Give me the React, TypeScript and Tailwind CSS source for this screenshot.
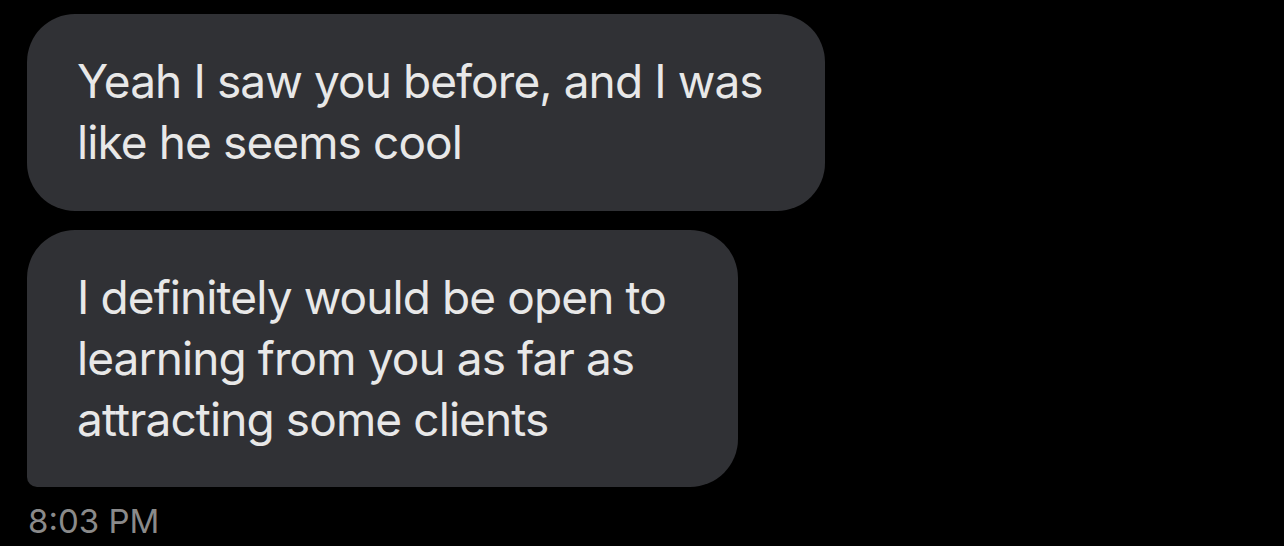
export default function App() {
    return (
        <div className="min-h-screen w-full bg-black pl-[27px] pt-[14px] font-['Inter',sans-serif]">
            <div className="flex flex-col items-start gap-[19px]">
                <div className="w-[798px] rounded-[48px] bg-[#303135] pl-[50px] pr-[40px] pt-[37px] pb-[38px] text-[46px] leading-[61px] tracking-[-0.9px] text-[#e8e8e8]">
                    Yeah I saw you before, and I was
                    <br/>
                    like he seems cool
                </div>
                <div className="w-[711px] rounded-[48px] rounded-bl-[10px] bg-[#303135] pl-[50px] pr-[40px] pt-[37px] pb-[37px] text-[46px] leading-[61px] tracking-[-0.9px] text-[#e8e8e8]">
                    I definitely would be open to
                    <br/>
                    learning from you as far as
                    <br/>
                    attracting some clients
                </div>
            </div>
            <div className="mt-[14px] pl-[1px] text-[33px] leading-[40px] text-[#8a8a8a]">
                8:03 PM
            </div>
        </div>
    );
}
